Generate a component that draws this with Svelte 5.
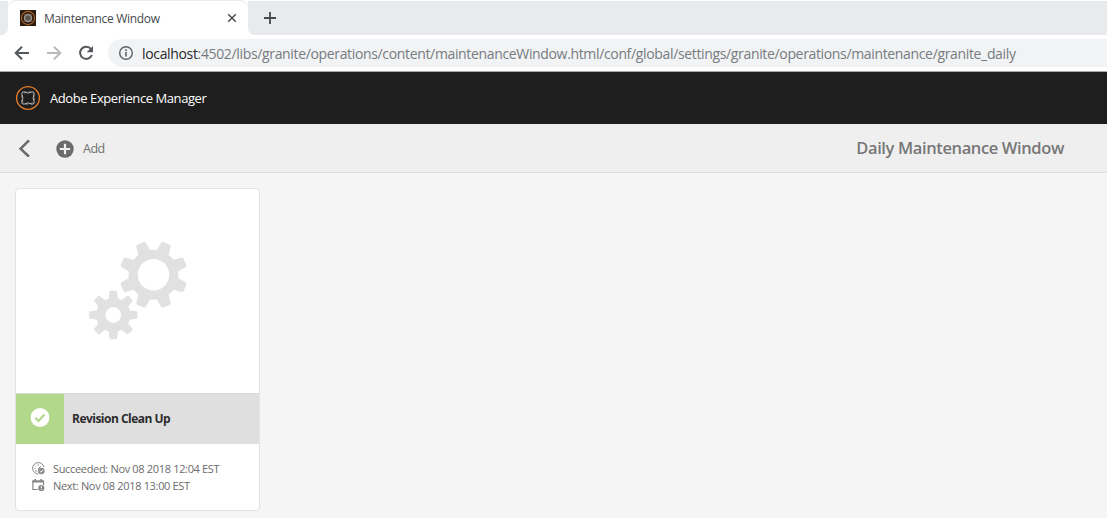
<script lang="ts">
	const angles = [0, 45, 90, 135, 180, 225, 270, 315];

	const url = {
		host: 'localhost',
		path: ':4502/libs/granite/operations/content/maintenanceWindow.html/conf/global/settings/granite/operations/maintenance/granite_daily'
	};

	const task = {
		title: 'Revision Clean Up',
		succeeded: 'Nov 08 2018 12:04 EST',
		next: 'Nov 08 2018 13:00 EST'
	};
</script>

<div class="page">
	<div class="tabs">
		<div class="previous-tab"></div>
		<div class="tab">
			<svg class="favicon" width="16" height="16" viewBox="0 0 16 16">
				<rect width="16" height="16" fill="#2b1c10" />
				<circle cx="8" cy="8" r="6.6" fill="none" stroke="#a8622a" stroke-width="1.1" />
				<circle cx="8" cy="8" r="3.5" fill="#5a524c" stroke="#9d938a" stroke-width="1.5" />
				<path d="M4.6 4.6l1.5 1.5M11.4 4.6L9.9 6.1M4.6 11.4l1.5-1.5M11.4 11.4L9.9 9.9" stroke="#a89c92" />
			</svg>
			<span class="tab-title">Maintenance Window</span>
			<svg class="close" width="10" height="10" viewBox="0 0 10 10">
				<path d="M1.2 1.2l7.6 7.6M8.8 1.2L1.2 8.8" stroke="#505357" stroke-width="1.6" />
			</svg>
		</div>
		<div class="new-tab">
			<svg width="12" height="12" viewBox="0 0 12 12">
				<path d="M6 0v12M0 6h12" stroke="#47494d" stroke-width="1.8" />
			</svg>
		</div>
	</div>

	<div class="toolbar">
		<svg width="16" height="16" viewBox="0 0 16 16" fill="none" stroke="#55585c" stroke-width="2">
			<path d="M15 8H2.2M8 1.7L1.7 8 8 14.3" />
		</svg>
		<svg width="16" height="16" viewBox="0 0 16 16" fill="none" stroke="#b8babd" stroke-width="2">
			<path d="M1 8h12.8M8 1.7L14.3 8 8 14.3" />
		</svg>
		<svg width="16" height="16" viewBox="0 0 16 16">
			<path d="M13 4A6.1 6.1 0 1 0 13.9 10" fill="none" stroke="#55585c" stroke-width="2" />
			<path d="M15 1v6.3H8.7z" fill="#55585c" />
		</svg>
		<div class="address">
			<svg width="16" height="16" viewBox="0 0 16 16">
				<circle cx="8" cy="8" r="6.3" fill="none" stroke="#5f6368" stroke-width="1.4" />
				<path d="M8 7v4.4M8 4.3v1.6" stroke="#5f6368" stroke-width="1.6" />
			</svg>
			<span class="url"><b>{url.host}</b>{url.path}</span>
		</div>
	</div>

	<header>
		<svg width="26" height="26" viewBox="0 0 26 26" fill="none">
			<circle cx="13" cy="13" r="11.4" stroke="#e07a26" stroke-width="1.4" />
			<path
				d="M9 6.8Q13 9.4 17 6.8Q19.8 6.9 19.2 9.2Q17 13 19.2 16.8Q19.8 19.1 17 19.2Q13 16.6 9 19.2Q6.2 19.1 6.8 16.8Q9 13 6.8 9.2Q6.2 6.9 9 6.8z"
				stroke="#cfc8c4"
				stroke-width=".9"
			/>
			<circle cx="13" cy="13" r="6.3" stroke="#b5aeaa" stroke-width=".9" stroke-dasharray="2.6 2.35" />
		</svg>
		<span class="product">Adobe Experience Manager</span>
	</header>

	<nav>
		<svg class="back" width="12" height="18" viewBox="0 0 12 18">
			<path d="M11 1.4L2.6 9.7l8.4 8" fill="none" stroke="#6b6b6b" stroke-width="2.6" />
		</svg>
		<svg class="plus" width="18" height="18" viewBox="0 0 18 18">
			<circle cx="9" cy="9" r="8.7" fill="#6b6b6b" />
			<path d="M9 3.8v10.4M3.8 9h10.4" stroke="#f0f0f0" stroke-width="2.2" />
		</svg>
		<span class="add">Add</span>
		<h1>Daily Maintenance Window</h1>
	</nav>

	<main>
		<article>
			<div class="preview">
				<svg width="100" height="100" viewBox="0 0 100 100" fill="#e1e1e1">
					<g transform="translate(65.5 34.8) rotate(22.5)">
						<circle r="20.3" fill="none" stroke="#e1e1e1" stroke-width="9.2" />
						{#each angles as angle}
							<path
								transform="rotate({angle})"
								d="M-6.6-22L-5.2-32.2Q-4.9-34-3.4-34H3.4Q4.9-34 5.2-32.2L6.6-22z"
							/>
						{/each}
					</g>
					<g transform="translate(25.3 75)">
						<circle r="12.5" fill="none" stroke="#e1e1e1" stroke-width="9.2" />
						{#each angles as angle}
							<path
								transform="rotate({angle})"
								d="M-4.7-15L-3.8-23Q-3.6-24.2-2.4-24.2H2.4Q3.6-24.2 3.8-23L4.7-15z"
							/>
						{/each}
					</g>
				</svg>
			</div>
			<div class="banner">
				<div class="status">
					<svg width="20" height="20" viewBox="0 0 20 20">
						<circle cx="10" cy="9.5" r="9.4" fill="#fff" />
						<path d="M5.4 9.9l3.1 3.1 6-6.6" fill="none" stroke="#b2d98b" stroke-width="2.2" />
					</svg>
				</div>
				<h2>{task.title}</h2>
			</div>
			<div class="details">
				<div class="row">
					<svg width="13" height="13" viewBox="0 0 13 13" fill="none" stroke="#858585">
						<path d="M6.2 12A5.7 5.7 0 1 1 11.9 5.2" />
						<path d="M2.4 6.5h1.2M6.2 2.2v1.4M3.4 3.6l.8.8M6.2 7L8.8 4M3 9h2" stroke-width=".9" />
						<circle cx="9.3" cy="9" r="3.3" fill="#8b8b8b" stroke="none" />
						<path d="M7.7 9l1.2 1.2L11 8" stroke="#fff" />
					</svg>
					<span>Succeeded: {task.succeeded}</span>
				</div>
				<div class="row next">
					<svg width="13" height="13" viewBox="0 0 13 13" fill="none" stroke="#858585">
						<path d="M5.6 10.5H.9V2H11.5v4" stroke-width="1.2" />
						<path d="M.4 2.5h11.6" stroke-width="2" />
						<path d="M3.2 0v2M9.2 0v2" stroke-width="1.6" />
						<circle cx="9.3" cy="9" r="3.1" fill="#858585" stroke="none" />
						<path d="M9.3 7v2.3M9.3 10.2v.9" stroke="#fff" />
					</svg>
					<span>Next: {task.next}</span>
				</div>
			</div>
		</article>
	</main>
</div>

<style>
	:global(body) {
		overflow: hidden;
	}

	.page {
		height: 518px;
		display: flex;
		flex-direction: column;
		background: #f5f5f5;
		font-family: 'Open Sans', 'Noto Sans', sans-serif;
		white-space: nowrap;
	}

	svg {
		flex: none;
		display: block;
	}

	.tabs {
		box-sizing: border-box;
		height: 35px;
		flex: none;
		display: flex;
		border-top: 1px solid #fff;
		background: #fff;
	}

	.previous-tab {
		width: 8px;
		background: #e8eaed;
		border-radius: 0 0 7px 0;
	}

	.tab {
		box-sizing: border-box;
		width: 240px;
		display: flex;
		align-items: center;
		padding: 0 11px 0 12px;
		background: #fff;
		box-shadow: 0 -1px #e8eaed;
		border-radius: 8px 8px 0 0;
	}

	.tab-title {
		margin-left: 8px;
		color: #45494d;
		font-size: 12px;
		letter-spacing: -0.3px;
	}

	.close {
		margin-left: auto;
	}

	.new-tab {
		flex: 1;
		display: flex;
		align-items: center;
		padding-left: 16px;
		background: #e8eaed;
		border-radius: 0 0 0 7px;
	}

	.toolbar {
		box-sizing: border-box;
		height: 37px;
		flex: none;
		display: flex;
		align-items: center;
		gap: 16px;
		padding-left: 14px;
		border-bottom: 1px solid #a9a9a9;
		background: #fff;
	}

	.address {
		box-sizing: border-box;
		height: 28px;
		flex: 1;
		display: flex;
		align-items: center;
		padding-left: 10px;
		margin-left: -2px;
		border-radius: 14px 0 0 14px;
		background: #f1f3f4;
	}

	.url {
		margin-left: 8px;
		color: #777b80;
		font-size: 14px;
		letter-spacing: -0.345px;
	}

	.url b {
		color: #27292c;
		font-weight: 400;
	}

	header {
		height: 52px;
		flex: none;
		display: flex;
		align-items: center;
		padding-left: 15px;
		background: #1e1e1e;
	}

	.product {
		margin-left: 9px;
		color: #fff;
		font-size: 13px;
		letter-spacing: -0.42px;
	}

	nav {
		box-sizing: border-box;
		height: 49px;
		flex: none;
		display: flex;
		align-items: center;
		padding: 0 43px 0 18px;
		border-bottom: 1px solid #dcdcdc;
		background: #efefef;
		color: #707070;
	}

	.back {
		margin-right: 26px;
	}

	.plus {
		margin-top: 2px;
	}

	.add {
		margin-left: 9px;
		font-size: 12.5px;
		letter-spacing: -0.5px;
	}

	h1 {
		margin: 0 0 0 auto;
		padding-bottom: 2px;
		color: #777;
		font-size: 16.5px;
		font-weight: 600;
		letter-spacing: -0.38px;
	}

	main {
		padding: 15px;
	}

	article {
		box-sizing: border-box;
		width: 245px;
		height: 323px;
		border: 1px solid #e3e3e3;
		border-radius: 4px;
		background: #fff;
		overflow: hidden;
	}

	.preview {
		box-sizing: border-box;
		height: 204px;
		padding: 51px 0 0 72px;
	}

	.banner {
		box-sizing: border-box;
		height: 51px;
		display: flex;
		align-items: center;
		border-top: 1px solid #dadada;
		background: #dfdfdf;
	}

	.status {
		box-sizing: border-box;
		width: 48px;
		height: 50px;
		display: flex;
		justify-content: center;
		padding-top: 14px;
		background: #b2d98b;
	}

	h2 {
		margin: 0 0 0 8px;
		padding-bottom: 1px;
		color: #2c2c2c;
		font-size: 12px;
		font-weight: 700;
		letter-spacing: -0.52px;
	}

	.details {
		padding: 16px 16px 0;
		color: #6b6b6b;
		font-size: 11px;
	}

	.row {
		height: 17px;
		display: flex;
		align-items: center;
		gap: 8px;
		letter-spacing: -0.33px;
	}
</style>
